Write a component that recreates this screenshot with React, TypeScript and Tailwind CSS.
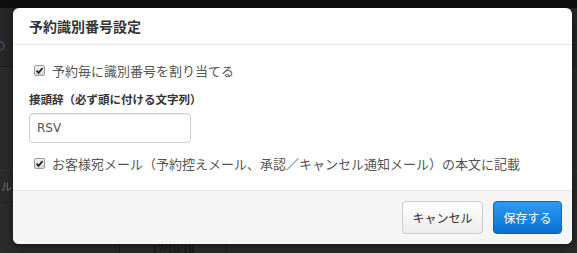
import React from "react";

const jp = "font-['Noto_Sans_CJK_JP',sans-serif]";

function Check() {
  return (
    <span className="flex h-[11px] w-[11px] items-center justify-center rounded-[2px] border border-[#9a9a9a] bg-gradient-to-b from-[#f4f4f4] to-[#d6d6d6]">
      <svg viewBox="0 0 10 10" className="h-[9px] w-[9px]">
        <path d="M1.8 5.2 L4 7.6 L8.4 2.2" fill="none" stroke="#222" strokeWidth="1.9" />
      </svg>
    </span>
  );
}

function CheckRow({ label }: { label: string }) {
  return (
    <label className="flex h-[16px] items-center gap-[7px] pl-[21px]">
      <Check />
      <span className="text-[13px] leading-none text-[#555]">{label}</span>
    </label>
  );
}

export default function App() {
  return (
    <div className={`relative h-[253px] w-[577px] overflow-hidden bg-[#2a2a2a] ${jp}`}>
      {/* page behind the backdrop */}
      <div className="h-[8px] bg-[#0d0e10]" />
      <div className="h-[59px] border-b border-[#1e1e1e] bg-[#262626]">
        <div className="pt-[24px]">
          <span className="-ml-[5px] inline-block h-[10px] w-[10px] rounded-full border-2 border-[#33475a]" />
        </div>
      </div>
      <div className="h-[104px] border-b border-[#333] bg-[#2a2a2a]" />
      <div className="flex h-[32px] items-center border-b border-[#222] bg-[#2a2a2a]">
        <span className="pl-[1px] text-[11px] text-[#777]">ル</span>
      </div>
      <div className="flex h-[50px] items-end bg-[#2b2b2b]">
        <div className="h-[9px] w-[120px] border-r border-[#1f1f1f]" />
        <div className="flex h-[9px] w-[107px] items-start justify-center overflow-hidden border-r border-[#1f1f1f]">
          <span className="font-['Liberation_Serif',serif] text-[12px] leading-[10px] text-[#111]">17/10/18</span>
        </div>
      </div>

      {/* modal */}
      <div className="absolute left-[13px] top-[8px] flex h-[236px] w-[559px] flex-col overflow-hidden rounded-[6px] bg-white shadow-[0_3px_8px_rgba(0,0,0,0.5)]">
        <div className="flex h-[37px] items-center border-b border-[#e5e5e5] px-[16px]">
          <h3 className="text-[14px] font-bold leading-none text-[#333]">予約識別番号設定</h3>
        </div>
        <div className="flex h-[145px] flex-col pt-[17px]">
          <CheckRow label="予約毎に識別番号を割り当てる" />
          <div className="mt-[14px] pl-[16px] text-[11.5px] font-bold leading-[14px] text-[#333]">
            接頭辞（必ず頭に付ける文字列）
          </div>
          <div className="mt-[7px] pl-[16px]">
            <input
              readOnly
              value="RSV"
              className="h-[30px] w-[162px] rounded-[4px] border border-[#cccccc] px-[7px] font-['DejaVu_Sans',sans-serif] text-[12px] text-[#555] outline-none shadow-[inset_0_1px_1px_rgba(0,0,0,0.075)]"
            />
          </div>
          <div className="mt-[12px]">
            <CheckRow label="お客様宛メール（予約控えメール、承認／キャンセル通知メール）の本文に記載" />
          </div>
        </div>
        <div className="flex flex-1 items-start justify-end gap-[10px] border-t border-[#e5e5e5] bg-[#f5f5f5] pr-[10px] pt-[10px]">
          <button className="h-[33px] w-[81px] rounded-[4px] border border-[#cccccc] bg-gradient-to-b from-white to-[#ececec] text-[12px] text-[#333]">
            キャンセル
          </button>
          <button className="h-[33px] w-[69px] rounded-[4px] border border-[#0d62b4] bg-gradient-to-b from-[#2d9cf0] to-[#0a6fd3] text-[12px] text-white">
            保存する
          </button>
        </div>
      </div>
    </div>
  );
}
